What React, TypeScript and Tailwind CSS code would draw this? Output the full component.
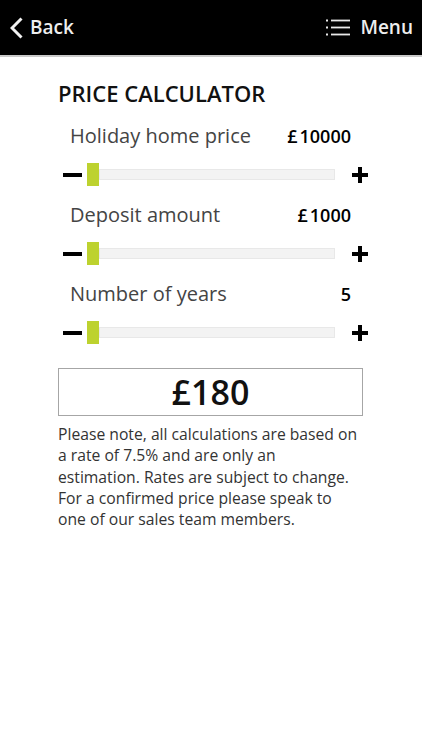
import { useState } from "react";

const font = { fontFamily: '"Open Sans", "Liberation Sans", sans-serif' };

type Row = { label: string; value: string };

function Slider() {
  return (
    <div className="flex h-[23px] items-center">
      {/* minus */}
      <div className="ml-[5px] h-[4px] w-[19px] bg-black" />
      {/* track */}
      <div className="ml-[5px] flex h-[23px] flex-1 items-center">
        <div className="h-[23px] w-[12px] shrink-0 bg-[#bdd22f]" />
        <div className="h-[11px] flex-1 border border-[#e8e8e8] bg-[#f3f3f3]" />
      </div>
      {/* plus */}
      <div className="relative ml-[17px] h-[16px] w-[16px]">
        <div className="absolute left-0 top-[6px] h-[4px] w-[16px] bg-black" />
        <div className="absolute left-[6px] top-0 h-[16px] w-[4px] bg-black" />
      </div>
    </div>
  );
}

export default function App() {
  const [rows] = useState<Row[]>([
    { label: "Holiday home price", value: "10000" },
    { label: "Deposit amount", value: "1000" },
    { label: "Number of years", value: "5" },
  ]);

  return (
    <div className="min-h-[750px] w-[422px] bg-white" style={font}>
      {/* Header */}
      <div className="flex h-[55px] items-center justify-between bg-black pl-[10px] pr-[9px] text-[19px] font-semibold text-[#eeeeee]">
        <div className="flex items-center">
          <svg width="13" height="22" viewBox="0 0 13 22" className="mt-[1px]">
            <polyline points="11.5,1.5 2,11 11.5,20.5" fill="none" stroke="#f2f2f2" strokeWidth="3" />
          </svg>
          <span className="ml-[7px] leading-none">Back</span>
        </div>
        <div className="flex items-center">
          <svg width="25" height="17" viewBox="0 0 25 17">
            <g fill="#e8e8e8">
              <rect x="0" y="0.5" width="2" height="2" />
              <rect x="0" y="7.5" width="2" height="2" />
              <rect x="0" y="14.5" width="2" height="2" />
            </g>
            <g stroke="#e8e8e8" strokeWidth="1.8">
              <line x1="5" y1="1.5" x2="24" y2="1.5" />
              <line x1="5" y1="8.5" x2="24" y2="8.5" />
              <line x1="5" y1="15.5" x2="24" y2="15.5" />
            </g>
          </svg>
          <span className="ml-[9px] leading-none">Menu</span>
        </div>
      </div>
      <div className="h-[2px] bg-[#c9c9c9]" />

      {/* Calculator */}
      <div className="ml-[58px] w-[310px] pt-[22px]">
        <h1 className="h-[28px] text-[22px] font-semibold leading-[28px] text-[#111]">PRICE CALCULATOR</h1>

        {rows.map((row, i) => (
          <div key={i} className={i === 0 ? "mt-[16px]" : "mt-[16px]"}>
            <div className="flex h-[26px] items-center justify-between pl-[12px] pr-[17px] leading-[26px]">
              <span className="text-[20px] text-[#444]">{row.label}</span>
              <span className="text-[18px] font-semibold text-black">
                {i < 2 && <span className="mr-[2px]">£</span>}
                {row.value}
              </span>
            </div>
            <div className="mt-[14px]">
              <Slider />
            </div>
          </div>
        ))}

        {/* Result */}
        <div className="mt-[24px] flex h-[48px] w-[305px] items-center justify-center border-[1.5px] border-[#a6a6a6] text-[34px] font-semibold leading-none text-[#111]">
          £180
        </div>

        <p className="mt-[8px] w-[301px] text-[15.7px] leading-[21.3px] text-[#333]">
          Please note, all calculations are based on a rate of 7.5% and are only an estimation. Rates are subject to change. For a confirmed price please speak to one of our sales team members.
        </p>
      </div>
    </div>
  );
}
